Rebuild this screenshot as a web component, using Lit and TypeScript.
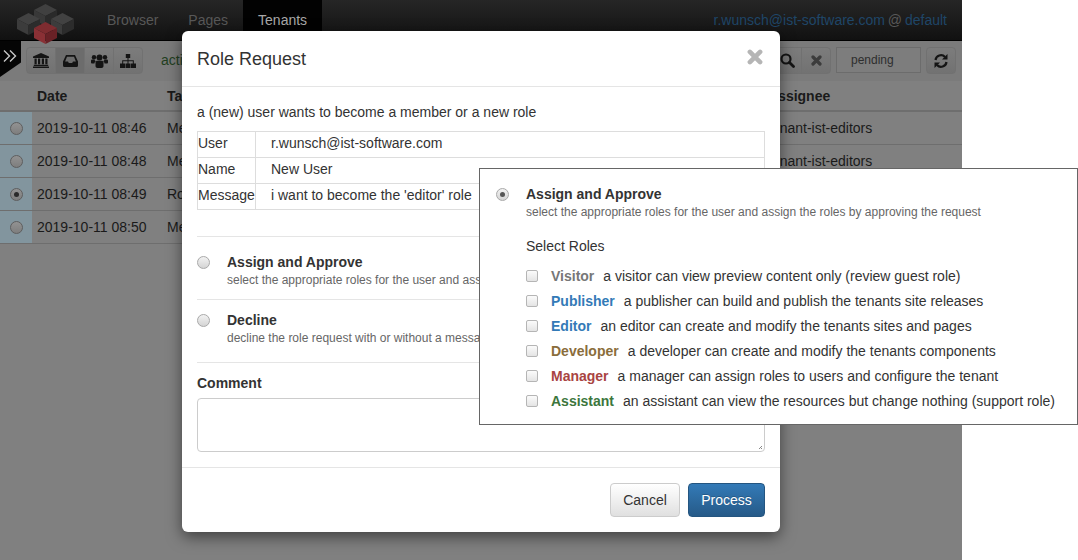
import { css, html, svg, LitElement } from 'lit';
import { customElement } from 'lit/decorators.js';

const rows = [
  { date: '2019-10-11 08:46', task: 'Membership', assignee: 'tenant-ist-editors', on: false },
  { date: '2019-10-11 08:48', task: 'Membership', assignee: 'tenant-ist-editors', on: false },
  { date: '2019-10-11 08:49', task: 'Role Request', assignee: 'tenant-ist-editors', on: true },
  { date: '2019-10-11 08:50', task: 'Membership', assignee: 'tenant-ist-editors', on: false },
];

const roles = [
  { name: 'Visitor', cls: 'visitor', text: 'a visitor can view preview content only (review guest role)' },
  { name: 'Publisher', cls: 'publisher', text: 'a publisher can build and publish the tenants site releases' },
  { name: 'Editor', cls: 'editor', text: 'an editor can create and modify the tenants sites and pages' },
  { name: 'Developer', cls: 'developer', text: 'a developer can create and modify the tenants components' },
  { name: 'Manager', cls: 'manager', text: 'a manager can assign roles to users and configure the tenant' },
  { name: 'Assistant', cls: 'assistant', text: 'an assistant can view the resources but change nothing (support role)' },
];

const cube = (cx: number, t: number, top: string, left: string, right: string) => svg`
  <path d="M${cx} ${t}l11.5 6-11.5 6-11.5-6z" fill=${top} />
  <path d="M${cx - 11.5} ${t + 6}l11.5 6v10l-11.5-6z" fill=${left} />
  <path d="M${cx + 11.5} ${t + 6}l-11.5 6v10l11.5-6z" fill=${right} />
`;

const icons = {
  bank: html`<svg width="16" height="15" viewBox="0 0 16 15"><path d="M8 0l8 3.6V5H0V3.6zM1.5 5.6h2.2v5.600H1.500zM5 5.600h2.200v5.600H5zM8.800 5.600H11v5.600H8.800zM12.300 5.600h2.200v5.600h-2.200zM.8 11.800h14.400V13H.8zM0 13.500h16V15H0z"/></svg>`,
  inbox: html`<svg width="15" height="12" viewBox="0 0 15 12"><path fill-rule="evenodd" d="M3 0h9l3 6.500v4a1.500 1.500 0 0 1-1.500 1.500h-12A1.500 1.500 0 0 1 0 10.500v-4zM4 1.800L2.100 6.500H5l.8 1.600h3.400L10 6.500h2.900L11 1.800z"/></svg>`,
  users: html`<svg width="17" height="14" viewBox="0 0 17 14"><circle cx="8.500" cy="3.500" r="3"/><circle cx="3" cy="3.200" r="2.200"/><circle cx="14" cy="3.200" r="2.200"/><path d="M4.500 8.500c0-1.200 1-1.800 2-1.800h4c1 0 2 .6 2 1.800V12c0 1-.8 2-2 2h-4c-1.200 0-2-1-2-2zM0 6.800c0-.8.700-1.300 1.500-1.300h2c.3 1 .8 1.400 1.300 1.800-.8.500-1.300 1.300-1.300 2.300H1.200C.5 9.600 0 9 0 8.300zM17 6.800c0-.8-.7-1.300-1.500-1.300h-2c-.3 1-.8 1.400-1.300 1.800.8.500 1.300 1.300 1.300 2.300h2.300c.7 0 1.200-.6 1.200-1.300z"/></svg>`,
  sitemap: html`<svg width="16" height="14" viewBox="0 0 16 14"><path d="M5.800 0h4.400v4H8.500v2.200h5.300v3.300h-1V7.200H8.500v2.300h-1V7.200H3.200v2.300h-1V6.200h5.300V4H5.800zM0 9.500h5V14H0zM5.500 9.500h5V14h-5zM11 9.500h5V14h-5z"/></svg>`,
  search: html`<svg width="15" height="15" viewBox="0 0 15 15"><circle cx="6" cy="6" r="4.500" fill="none" stroke="currentColor" stroke-width="2.200"/><path d="M9.500 9.500L13.500 13.500" stroke="currentColor" stroke-width="2.800" stroke-linecap="round"/></svg>`,
  times: html`<svg width="11" height="11" viewBox="0 0 11 11"><path d="M2 2l7 7M9 2L2 9" stroke="#3c3c3c" stroke-width="3.200" stroke-linecap="round"/></svg>`,
  close: html`<svg width="16" height="16" viewBox="0 0 11 11"><path d="M2 2l7 7M9 2L2 9" stroke="currentColor" stroke-width="3.200" stroke-linecap="round"/></svg>`,
  refresh: html`<svg width="14" height="14" viewBox="0 0 14 14"><path d="M1.500 6A5.500 5.500 0 0 1 11 3" fill="none" stroke="currentColor" stroke-width="2.200"/><path d="M13.500 0v5.500H8z"/><path d="M12.500 8A5.500 5.500 0 0 1 3 11" fill="none" stroke="currentColor" stroke-width="2.200"/><path d="M.5 14V8.500H6z"/></svg>`,
};

@customElement('app-root')
export class AppRoot extends LitElement {
  static styles = css`
    :host {
      display: block;
      width: 1078px;
      height: 560px;
      position: relative;
      overflow: hidden;
      background: #fff;
      font-family: 'Liberation Sans', Arial, sans-serif;
      font-size: 14px;
      color: #333;
    }
    /* page behind the dialog, colours are the dimmed ones */
    .app {
      width: 962px;
      height: 560px;
      position: relative;
      isolation: isolate;
      overflow: hidden;
      background: #808080;
      color: #1a1a1a;
    }
    .navbar {
      height: 41px;
      display: flex;
      align-items: stretch;
      background: linear-gradient(#262626, #111);
      border-bottom: 1px solid #000;
      box-sizing: border-box;
      position: relative;
      z-index: 1;
    }
    .logo {
      display: block;
      flex: none;
      margin: 3px 0 -5px 16px;
    }
    .nav {
      display: flex;
      margin-left: 16px;
    }
    .nav a {
      padding: 0 15px;
      line-height: 40px;
      color: #585858;
    }
    .nav a.active {
      background: #020202;
      color: #a8a8a8;
    }
    .user {
      margin-left: auto;
      padding-right: 15px;
      line-height: 40px;
      color: #585858;
      word-spacing: -1px;
    }
    .user a {
      color: #1f4668;
    }
    .toolbar {
      height: 40px;
      display: flex;
      align-items: flex-start;
      padding: 6px 6px 0 26px;
      box-sizing: border-box;
      position: relative;
      background: #7b7b7b;
    }
    .toggle {
      position: absolute;
      left: 0;
      top: 0;
      width: 21px;
      height: 36px;
      background: #050505;
      clip-path: polygon(0 0, 100% 0, 100% 60%, 0 100%);
      color: #c8c8c8;
    }
    .toggle svg {
      display: block;
      margin: 8px 0 0 3px;
    }
    .group {
      display: flex;
    }
    .btn {
      height: 27px;
      width: 30px;
      display: flex;
      align-items: center;
      justify-content: center;
      box-sizing: border-box;
      border: 1px solid #717171;
      margin-left: -1px;
      background: linear-gradient(#7c7c7c, #727272);
      fill: #141414;
      color: #141414;
    }
    .group .btn:first-child {
      border-radius: 4px 0 0 4px;
      margin-left: 0;
    }
    .group .btn:last-child {
      border-radius: 0 4px 4px 0;
    }
    .btn.active {
      background: #6c6c6c;
    }
    .status {
      margin-left: 18px;
      line-height: 27px;
      color: #223f1f;
    }
    .tools {
      margin-left: auto;
      display: flex;
    }
    .pending {
      width: 85px;
      height: 26px;
      margin: 0 5px;
      padding-left: 14px;
      box-sizing: border-box;
      border: 1px solid #6c6c6c;
      background: #7d7d7d;
      line-height: 24px;
      font-size: 12px;
      color: #2e2e2e;
    }
    .solo {
      border-radius: 4px;
      margin-left: 0;
    }
    .row {
      display: grid;
      grid-template-columns: 32px 130px 601px 199px;
      height: 33px;
      line-height: 32px;
      border-bottom: 1px solid #6e6e6e;
      box-sizing: border-box;
    }
    .row > div {
      padding-left: 5px;
      white-space: nowrap;
      overflow: hidden;
    }
    .row.head {
      height: 31px;
      line-height: 30px;
      border-bottom: 2px solid #6e6e6e;
      font-weight: bold;
    }
    .row .pick {
      padding: 0;
      background: #82959e;
      display: flex;
      align-items: center;
      justify-content: center;
    }
    .radio {
      width: 13px;
      height: 13px;
      box-sizing: border-box;
      flex: none;
      border-radius: 50%;
      border: 1px solid #a9a9a9;
      background: linear-gradient(#f2f2f2, #d4d4d4);
      position: relative;
    }
    .pick .radio {
      border-color: #5e5e5e;
      background: linear-gradient(#929292, #7e7e7e);
    }
    .radio.on::after {
      content: '';
      position: absolute;
      left: 3px;
      top: 3px;
      width: 5px;
      height: 5px;
      border-radius: 50%;
      background: #555;
    }
    .pick .radio.on::after {
      background: #2a2a2a;
    }
    .modal {
      position: absolute;
      left: 182px;
      top: 31px;
      width: 598px;
      height: 501px;
      background: #fff;
      border-radius: 6px;
      box-shadow: 0 5px 15px rgba(0, 0, 0, 0.5);
      display: flex;
      flex-direction: column;
    }
    .m-head {
      height: 56px;
      box-sizing: border-box;
      border-bottom: 1px solid #e5e5e5;
      padding: 0 15px;
      display: flex;
      align-items: center;
      justify-content: space-between;
    }
    .m-head h4 {
      margin: 0;
      font-size: 18px;
      font-weight: normal;
      line-height: 56px;
    }
    .m-close {
      color: #b5b5b5;
      margin-right: 2px;
      margin-top: -3px;
      display: flex;
    }
    .m-body {
      padding: 0 15px;
      flex: 1;
    }
    .intro {
      margin: 17px 0 11px;
      line-height: 16px;
    }
    table {
      width: 568px;
      border-collapse: collapse;
    }
    td {
      border: 1px solid #ddd;
      height: 25px;
      padding: 0;
      line-height: 23px;
      vertical-align: top;
    }
    td:first-child {
      width: 57px;
    }
    td:last-child {
      padding-left: 15px;
    }
    .sep {
      border-top: 1px solid #e5e5e5;
      margin: 0;
    }
    .sep.first {
      margin-top: 26px;
    }
    .choice {
      display: flex;
      gap: 17px;
      height: 62px;
      box-sizing: border-box;
      padding-top: 16px;
    }
    .choice .radio {
      margin-top: 3px;
    }
    .choice.decline {
      padding-top: 11px;
    }
    .c-title {
      font-weight: bold;
      line-height: 18px;
    }
    .c-sub {
      font-size: 12px;
      line-height: 18px;
      color: #666;
      white-space: nowrap;
    }
    .label {
      font-weight: bold;
      margin-top: 12px;
      line-height: 16px;
    }
    .area {
      height: 54px;
      margin-top: 7px;
      border: 1px solid #ccc;
      border-radius: 4px;
      box-sizing: border-box;
      position: relative;
    }
    .grip {
      position: absolute;
      right: 1px;
      bottom: 1px;
    }
    .m-foot {
      height: 65px;
      box-sizing: border-box;
      border-top: 1px solid #e5e5e5;
      padding: 15px 15px 0;
      display: flex;
      justify-content: flex-end;
      gap: 8px;
    }
    .action {
      height: 34px;
      box-sizing: border-box;
      border-radius: 4px;
      line-height: 32px;
      text-align: center;
      border: 1px solid #ccc;
      background: linear-gradient(#fff, #e0e0e0);
      width: 70px;
    }
    .action.primary {
      width: 77px;
      color: #fff;
      border-color: #245580;
      background: linear-gradient(#337ab7, #265a88);
      text-shadow: 0 -1px 0 rgba(0, 0, 0, 0.2);
    }
    .callout {
      position: absolute;
      left: 479px;
      top: 168px;
      width: 599px;
      height: 257px;
      box-sizing: border-box;
      background: #fff;
      border: 1px solid #666;
      padding: 16px 16px 0;
      display: flex;
      gap: 17px;
    }
    .callout .radio {
      margin-top: 3px;
    }
    .select {
      margin: 16px 0 8px;
      line-height: 18px;
    }
    .role {
      display: flex;
      align-items: center;
      height: 25px;
      white-space: nowrap;
    }
    .check {
      width: 12px;
      height: 12px;
      box-sizing: border-box;
      border: 1px solid #b5b5b5;
      border-radius: 2px;
      background: linear-gradient(#fbfbfb, #e4e4e4);
      margin-right: 13px;
    }
    .role b {
      margin-right: 9px;
    }
    .visitor { color: #777; }
    .publisher, .editor { color: #337ab7; }
    .developer { color: #8a6d3b; }
    .manager { color: #a94442; }
    .assistant { color: #3c763d; }
  `;

  render() {
    return html`
      <div class="app">
        <div class="navbar">
          <svg class="logo" width="60" height="43" viewBox="0 0 60 43">
            ${cube(29.5, 1, '#404040', '#383838', '#2a2a2a')}
            ${cube(12.5, 10, '#424242', '#3c3c3c', '#2c2c2c')}
            ${cube(46.5, 10, '#424242', '#3c3c3c', '#2c2c2c')}
            ${cube(29.5, 19, '#7e2c30', '#8a3035', '#692126')}
          </svg>
          <div class="nav">
            <a>Browser</a>
            <a>Pages</a>
            <a class="active">Tenants</a>
          </div>
          <div class="user"><a>r.wunsch@ist-software.com</a> @ <a>default</a></div>
        </div>
        <div class="toolbar">
          <div class="toggle">
            <svg width="14" height="14" viewBox="0 0 14 14" fill="none" stroke="currentColor" stroke-width="1.400"><path d="M1 1.500l5.500 5.500-5.500 5.500M7 1.500l5.500 5.500-5.500 5.500"/></svg>
          </div>
          <div class="group">
            <div class="btn">${icons.bank}</div>
            <div class="btn active">${icons.inbox}</div>
            <div class="btn">${icons.users}</div>
            <div class="btn">${icons.sitemap}</div>
          </div>
          <div class="status">active</div>
          <div class="tools">
            <div class="group">
              <div class="btn">${icons.search}</div>
              <div class="btn">${icons.times}</div>
            </div>
            <div class="pending">pending</div>
            <div class="btn solo">${icons.refresh}</div>
          </div>
        </div>
        <div class="row head">
          <div></div><div>Date</div><div>Task</div><div>Assignee</div>
        </div>
        ${rows.map(r => html`
          <div class="row">
            <div class="pick"><span class="radio ${r.on ? 'on' : ''}"></span></div>
            <div>${r.date}</div>
            <div>${r.task}</div>
            <div>${r.assignee}</div>
          </div>
        `)}
      </div>

      <div class="modal">
        <div class="m-head">
          <h4>Role Request</h4>
          <span class="m-close">${icons.close}</span>
        </div>
        <div class="m-body">
          <p class="intro">a (new) user wants to become a member or a new role</p>
          <table>
            <tr><td>User</td><td>r.wunsch@ist-software.com</td></tr>
            <tr><td>Name</td><td>New User</td></tr>
            <tr><td>Message</td><td>i want to become the 'editor' role</td></tr>
          </table>
          <div class="sep first"></div>
          <div class="choice">
            <span class="radio"></span>
            <div>
              <div class="c-title">Assign and Approve</div>
              <div class="c-sub">select the appropriate roles for the user and assign the roles by approving the request</div>
            </div>
          </div>
          <div class="sep"></div>
          <div class="choice decline">
            <span class="radio"></span>
            <div>
              <div class="c-title">Decline</div>
              <div class="c-sub">decline the role request with or without a message</div>
            </div>
          </div>
          <div class="sep"></div>
          <div class="label">Comment</div>
          <div class="area">
            <svg class="grip" width="5" height="5" viewBox="0 0 5 5" stroke="#888" fill="none"><path d="M1 4l3-3M3 4l1-1"/></svg>
          </div>
        </div>
        <div class="m-foot">
          <div class="action">Cancel</div>
          <div class="action primary">Process</div>
        </div>
      </div>

      <div class="callout">
        <span class="radio on"></span>
        <div>
          <div class="c-title">Assign and Approve</div>
          <div class="c-sub">select the appropriate roles for the user and assign the roles by approving the request</div>
          <div class="select">Select Roles</div>
          ${roles.map(r => html`
            <div class="role">
              <span class="check"></span>
              <b class=${r.cls}>${r.name}</b>
              <span>${r.text}</span>
            </div>
          `)}
        </div>
      </div>
    `;
  }
}
